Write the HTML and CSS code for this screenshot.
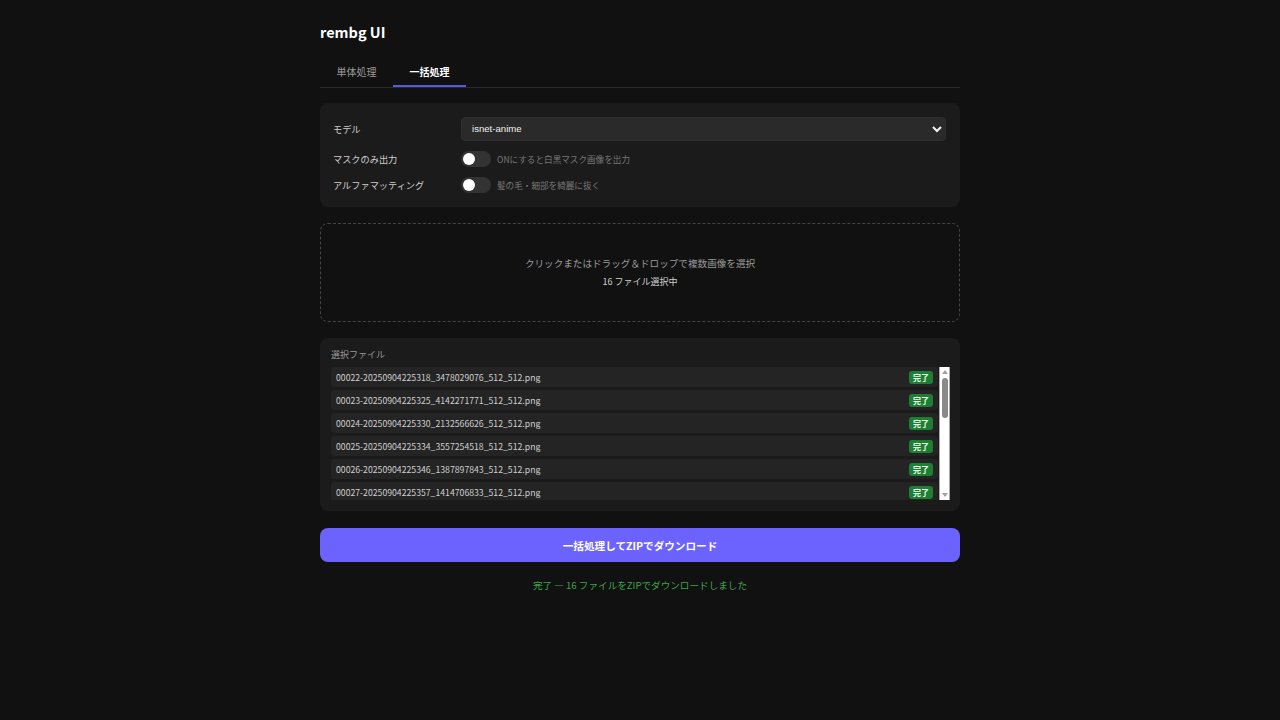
FILE: index.html
```html
<!DOCTYPE html>
<html lang="ja">
<head>
<meta charset="utf-8">
<title>rembg UI</title>
<link rel="stylesheet" href="styles.css">
</head>
<body>
<div class="app">
  <h1 class="title">rembg UI</h1>
  <div class="tabs">
    <div class="tab">単体処理</div>
    <div class="tab active">一括処理</div>
  </div>

  <section class="card settings">
    <div class="row">
      <div class="label">モデル</div>
      <select class="select"><option>isnet-anime</option></select>
    </div>
    <div class="row">
      <div class="label">マスクのみ出力</div>
      <div class="toggle"><span class="knob"></span></div>
      <div class="hint">ONにすると白黒マスク画像を出力</div>
    </div>
    <div class="row">
      <div class="label">アルファマッティング</div>
      <div class="toggle"><span class="knob"></span></div>
      <div class="hint">髪の毛・細部を綺麗に抜く</div>
    </div>
  </section>

  <section class="drop">
    <div class="drop-main">クリックまたはドラッグ＆ドロップで複数画像を選択</div>
    <div class="drop-count">16 ファイル選択中</div>
  </section>

  <section class="card files">
    <div class="files-label">選択ファイル</div>
    <div class="list-wrap">
      <div class="list">
        <div class="item"><span>00022-20250904225318_3478029076_512_512.png</span><span class="badge">完了</span></div>
        <div class="item"><span>00023-20250904225325_4142271771_512_512.png</span><span class="badge">完了</span></div>
        <div class="item"><span>00024-20250904225330_2132566626_512_512.png</span><span class="badge">完了</span></div>
        <div class="item"><span>00025-20250904225334_3557254518_512_512.png</span><span class="badge">完了</span></div>
        <div class="item"><span>00026-20250904225346_1387897843_512_512.png</span><span class="badge">完了</span></div>
        <div class="item"><span>00027-20250904225357_1414706833_512_512.png</span><span class="badge">完了</span></div>
        <div class="item"><span>00028-20250904225402_2754310982_512_512.png</span><span class="badge">完了</span></div>
        <div class="item"><span>00029-20250904225409_3901827465_512_512.png</span><span class="badge">完了</span></div>
        <div class="item"><span>00030-20250904225415_1093847562_512_512.png</span><span class="badge">完了</span></div>
        <div class="item"><span>00031-20250904225421_2847561930_512_512.png</span><span class="badge">完了</span></div>
        <div class="item"><span>00032-20250904225428_3718264059_512_512.png</span><span class="badge">完了</span></div>
        <div class="item"><span>00033-20250904225436_1562839470_512_512.png</span><span class="badge">完了</span></div>
        <div class="item"><span>00034-20250904225441_4028371956_512_512.png</span><span class="badge">完了</span></div>
        <div class="item"><span>00035-20250904225449_2290475813_512_512.png</span><span class="badge">完了</span></div>
        <div class="item"><span>00036-20250904225455_3365019284_512_512.png</span><span class="badge">完了</span></div>
        <div class="item"><span>00037-20250904225503_1178492036_512_512.png</span><span class="badge">完了</span></div>
      </div>
      <div class="scrollbar">
        <span class="arrow up"></span>
        <div class="track"><span class="thumb"></span></div>
        <span class="arrow down"></span>
      </div>
    </div>
  </section>

  <button class="run">一括処理してZIPでダウンロード</button>
  <div class="status">完了 — 16 ファイルをZIPでダウンロードしました</div>
</div>
</body>
</html>
```

FILE: styles.css
```css
html, body {
  margin: 0;
  padding: 0;
  background: #111111;
  color: #e6e6e6;
  font-family: "Noto Sans CJK JP", "Noto Sans", sans-serif;
}

.app {
  width: 640px;
  margin: 0 auto;
  padding-top: 20px;
}

.title {
  margin: 0 0 12px;
  font-size: 14.5px;
  line-height: 24px;
  font-weight: 700;
  color: #ffffff;
}

.tabs {
  display: flex;
  border-bottom: 1px solid #2a2a2a;
}

.tab {
  padding: 8px 16.5px 4.5px;
  font-size: 10px;
  line-height: 16px;
  color: #9a9a9a;
  border-bottom: 2px solid transparent;
}

.tab.active {
  color: #ffffff;
  font-weight: 700;
  border-bottom-color: #5b57e0;
}

.card {
  background: #1b1b1b;
  border-radius: 8px;
}

.settings {
  margin-top: 15px;
  padding: 14px 14px 14px 13px;
  display: flex;
  flex-direction: column;
  gap: 10px;
}

.row {
  display: flex;
  align-items: center;
}

.label {
  width: 128px;
  flex: none;
  font-size: 9.2px;
  color: #cfcfcf;
}

.select {
  flex: 1;
  height: 24px;
  background: #2a2a2a;
  color: #f0f0f0;
  border: 1px solid #2e2e2e;
  border-radius: 4px;
  padding: 0 6px;
  font-family: "Liberation Sans", Arial, sans-serif;
  font-size: 9.6px;
  color-scheme: dark;
}

.toggle {
  width: 30px;
  height: 16px;
  border-radius: 8px;
  background: #333333;
  display: flex;
  align-items: center;
  padding: 0 2px;
  box-sizing: border-box;
  flex: none;
}

.knob {
  width: 12px;
  height: 12px;
  border-radius: 50%;
  background: #ffffff;
}

.hint {
  margin-left: 6px;
  font-size: 8.6px;
  color: #777777;
}

.drop {
  margin-top: 16.5px;
  height: 99px;
  box-sizing: border-box;
  border: 1px dashed #444444;
  border-radius: 8px;
  display: flex;
  flex-direction: column;
  align-items: center;
  justify-content: center;
  gap: 3px;
}

.drop-main {
  font-size: 9.6px;
  line-height: 16px;
  color: #9a9a9a;
}

.drop-count {
  font-size: 9px;
  line-height: 16px;
  color: #cfcfcf;
}

.files {
  margin-top: 16px;
  padding: 10px 10px 11px 11px;
}

.files-label {
  font-size: 9px;
  line-height: 14px;
  color: #9a9a9a;
  margin-bottom: 5px;
}

.list-wrap {
  display: flex;
  gap: 1px;
  height: 133px;
}

.list {
  flex: 1;
  overflow: hidden;
  display: flex;
  flex-direction: column;
  gap: 3px;
}

.item {
  flex: none;
  height: 20px;
  background: #242424;
  border-radius: 4px;
  display: flex;
  align-items: center;
  justify-content: space-between;
  padding: 0 5px;
  font-size: 8.7px;
  color: #cfcfcf;
}

.badge {
  background: #1e7e34;
  color: #e8ffe8;
  font-size: 8px;
  font-weight: 700;
  line-height: 13px;
  padding: 0 4px;
  border-radius: 3px;
}

.scrollbar {
  width: 11px;
  flex: none;
  box-sizing: border-box;
  background: #ffffff;
  border-left: 1px solid #a8a8a8;
  border-right: 1px solid #a8a8a8;
  display: flex;
  flex-direction: column;
  align-items: center;
}

.arrow {
  flex: none;
  width: 0;
  height: 0;
  border-left: 3px solid transparent;
  border-right: 3px solid transparent;
}

.arrow.up {
  margin-top: 3px;
  border-bottom: 4px solid #a0a0a0;
}

.arrow.down {
  margin-bottom: 3px;
  border-top: 4px solid #a0a0a0;
}

.track {
  flex: 1;
  width: 100%;
  display: flex;
  justify-content: center;
  padding-top: 4px;
  box-sizing: border-box;
}

.thumb {
  width: 6px;
  height: 40px;
  border-radius: 3px;
  background: #8a8a8a;
}

.run {
  display: block;
  width: 100%;
  margin-top: 17px;
  height: 34px;
  border: none;
  border-radius: 8px;
  background: #6c63ff;
  color: #ffffff;
  font-family: "Noto Sans CJK JP", "Noto Sans", sans-serif;
  font-size: 10.6px;
  font-weight: 700;
}

.status {
  margin-top: 16px;
  text-align: center;
  font-size: 9.6px;
  color: #3fa34d;
}
```
